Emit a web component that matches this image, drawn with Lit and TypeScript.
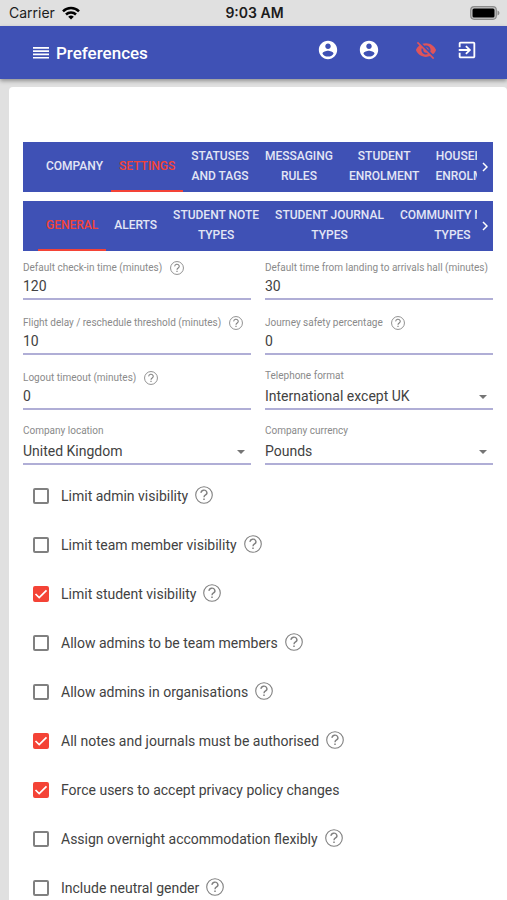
import { LitElement, html, css, svg, nothing } from "lit";
import { customElement, property } from "lit/decorators.js";

interface Field {
  id: string;
  label: string;
  value: string;
  kind: "number" | "select";
  help?: boolean;
}

interface Option {
  id: string;
  label: string;
  checked: boolean;
  help: boolean;
}

const FIELDS: Field[] = [
  { id: "checkin", label: "Default check-in time (minutes)", value: "120", kind: "number", help: true },
  { id: "landing", label: "Default time from landing to arrivals hall (minutes)", value: "30", kind: "number" },
  { id: "delay", label: "Flight delay / reschedule threshold (minutes)", value: "10", kind: "number", help: true },
  { id: "safety", label: "Journey safety percentage", value: "0", kind: "number", help: true },
  { id: "logout", label: "Logout timeout (minutes)", value: "0", kind: "number", help: true },
  { id: "phone", label: "Telephone format", value: "International except UK", kind: "select" },
  { id: "location", label: "Company location", value: "United Kingdom", kind: "select" },
  { id: "currency", label: "Company currency", value: "Pounds", kind: "select" },
];

const OPTIONS: Option[] = [
  { id: "limit-admin", label: "Limit admin visibility", checked: false, help: true },
  { id: "limit-team", label: "Limit team member visibility", checked: false, help: true },
  { id: "limit-student", label: "Limit student visibility", checked: true, help: true },
  { id: "admins-team", label: "Allow admins to be team members", checked: false, help: true },
  { id: "admins-org", label: "Allow admins in organisations", checked: false, help: true },
  { id: "notes-auth", label: "All notes and journals must be authorised", checked: true, help: true },
  { id: "privacy", label: "Force users to accept privacy policy changes", checked: true, help: false },
  { id: "overnight", label: "Assign overnight accommodation flexibly", checked: false, help: true },
  { id: "neutral", label: "Include neutral gender", checked: false, help: true },
];

const MAIN_TABS = [
  ["COMPANY"],
  ["SETTINGS"],
  ["STATUSES", "AND TAGS"],
  ["MESSAGING", "RULES"],
  ["STUDENT", "ENROLMENT"],
  ["HOUSEHOLD", "ENROLMENT"],
];

const SUB_TABS = [
  ["GENERAL"],
  ["ALERTS"],
  ["STUDENT NOTE", "TYPES"],
  ["STUDENT JOURNAL", "TYPES"],
  ["COMMUNITY NOTE", "TYPES"],
];

const ACCOUNT = svg`<path d="M12 2C6.48 2 2 6.48 2 12s4.48 10 10 10 10-4.48 10-10S17.52 2 12 2zm0 3c1.66 0 3 1.34 3 3s-1.34 3-3 3-3-1.34-3-3 1.34-3 3-3zm0 14.2c-2.5 0-4.71-1.28-6-3.22.03-1.99 4-3.08 6-3.08 1.99 0 5.97 1.09 6 3.08-1.29 1.94-3.5 3.22-6 3.22z"/>`;
const HIDDEN = svg`<path d="M12 7c2.76 0 5 2.24 5 5 0 .65-.13 1.26-.36 1.83l2.92 2.92c1.51-1.26 2.7-2.89 3.43-4.75-1.73-4.39-6-7.5-11-7.5-1.4 0-2.74.25-3.98.7l2.16 2.16C10.74 7.13 11.35 7 12 7zM2 4.27l2.28 2.28.46.46C3.08 8.3 1.78 10.02 1 12c1.73 4.39 6 7.5 11 7.5 1.55 0 3.03-.3 4.38-.84l.42.42L19.73 22 21 20.73 3.27 3 2 4.27zM7.53 9.8l1.55 1.55c-.05.21-.08.43-.08.65 0 1.66 1.34 3 3 3 .22 0 .44-.03.65-.08l1.55 1.55c-.67.33-1.41.53-2.2.53-2.76 0-5-2.24-5-5 0-.79.2-1.53.53-2.2zm4.31-.78l3.15 3.15.02-.16c0-1.66-1.34-3-3-3l-.17.01z"/>`;
const EXIT = svg`<path d="M10.09 15.59L11.5 17l5-5-5-5-1.41 1.41L12.67 11H3v2h9.67l-2.58 2.59zM19 3H5c-1.11 0-2 .9-2 2v4h2V5h14v14H5v-4H3v4c0 1.1.89 2 2 2h14c1.1 0 2-.9 2-2V5c0-1.1-.9-2-2-2z"/>`;

@customElement("help-button")
export class HelpButton extends LitElement {
  @property() topic = "";

  static styles = css`
    :host {
      display: block;
      width: 14px;
      height: 14px;
      flex: none;
    }
    :host([large]) {
      width: 18px;
      height: 18px;
    }
    .help {
      display: block;
      width: 100%;
      height: 100%;
      padding: 0;
      border: 0;
      background: none;
      color: #808080;
    }
    .glyph {
      display: block;
      width: 100%;
      height: 100%;
      fill: none;
      stroke: currentColor;
    }
  `;

  render() {
    return html`<button class="help" type="button" aria-label="Help: ${this.topic}">
      <svg class="glyph" viewBox="0 0 18 18" aria-hidden="true">
        <circle cx="9" cy="9" r="8.3" stroke-width="1.1" />
        <path d="M6.1 6.9a2.9 2.6 0 1 1 4.5 2c-1 .7-1.6 1.1-1.6 2.3" stroke-width="1.4" />
        <path d="M9 12.4v1.6" stroke-width="1.5" />
      </svg>
    </button>`;
  }
}

@customElement("tab-strip")
export class TabStrip extends LitElement {
  @property({ attribute: false }) tabs: string[][] = [];
  @property({ type: Number }) active = 0;
  @property() name = "";

  static styles = css`
    :host {
      display: flex;
      height: 50px;
      padding-left: 15px;
      background: #3f51b5;
    }
    .tabs {
      display: flex;
      flex: 1;
      min-width: 0;
      overflow: hidden;
    }
    .tab {
      flex: none;
      padding: 0 8px;
      border: 0;
      border-bottom: 2px solid transparent;
      background: none;
      color: #e3e6f5;
      font: 500 12px/20px Roboto, sans-serif;
      text-align: center;
    }
    .tab.on {
      color: #f44336;
      border-color: #f44336;
    }
    .line {
      display: block;
      white-space: nowrap;
    }
    .next {
      display: grid;
      flex: none;
      place-items: center;
      width: 16px;
      padding: 0;
      border: 0;
      background: none;
    }
    .chevron {
      width: 6px;
      height: 10px;
      fill: none;
      stroke: #ffffff;
      stroke-width: 1.5;
    }
  `;

  render() {
    return html`
      <div class="tabs" role="tablist" aria-label=${this.name}>
        ${this.tabs.map(
          (lines, i) => html`<button
            class="tab ${i === this.active ? "on" : ""}"
            role="tab"
            aria-selected=${i === this.active ? "true" : "false"}
          >${lines.map((line) => html`<span class="line">${line}</span>`)}</button>`
        )}
      </div>
      <button class="next" type="button" aria-label="More tabs">
        <svg class="chevron" viewBox="0 0 6 10" aria-hidden="true"><path d="M1 1l4 4-4 4" /></svg>
      </button>
    `;
  }
}

@customElement("app-root")
export class AppRoot extends LitElement {
  static styles = css`
    :host {
      display: block;
      min-height: 100vh;
      background: #e0e0e0;
      color: #424242;
      font-family: Roboto, sans-serif;
    }
    .status {
      display: grid;
      grid-template-columns: 1fr auto 1fr;
      align-items: center;
      height: 26px;
      padding: 0 7px 0 9px;
      color: #1c1c1c;
      font: 14px/20px Inter, sans-serif;
    }
    .carrier {
      display: flex;
      align-items: center;
      gap: 7px;
    }
    .wifi {
      width: 18px;
      height: 14px;
    }
    .time {
      font-weight: 600;
    }
    .battery {
      justify-self: end;
      width: 30px;
      height: 14px;
    }
    .bar {
      display: flex;
      align-items: center;
      height: 53px;
      padding: 0 29px 0 33px;
      background: #3f51b5;
      box-shadow: 0 2px 4px rgba(0, 0, 0, 0.35);
      color: #ffffff;
    }
    .icon {
      display: block;
      padding: 0;
      border: 0;
      background: none;
      color: inherit;
    }
    .icon svg {
      display: block;
      fill: currentColor;
    }
    .title {
      flex: 1;
      margin: 0 0 0 7px;
      font: 500 17px/24px Roboto, sans-serif;
    }
    .actions {
      display: flex;
      align-items: center;
      gap: 19px;
      padding-bottom: 6px;
    }
    .actions svg {
      width: 22px;
      height: 22px;
    }
    .off {
      margin-left: 16px;
      color: #e0545a;
    }
    .card {
      margin: 8px 0 0 9px;
      padding: 55px 14px 2px;
      border-radius: 4px 4px 0 0;
      background: #ffffff;
    }
    .strips {
      display: grid;
      grid-template-columns: minmax(0, 1fr);
      gap: 9px;
    }
    .fields {
      display: grid;
      grid-template-columns: repeat(2, minmax(0, 1fr));
      gap: 0 14px;
      margin-top: 3px;
    }
    .field {
      display: flex;
      flex-direction: column;
      justify-content: flex-end;
      min-width: 0;
      height: 55px;
    }
    .fields .field:nth-child(-n + 2) {
      height: 46px;
    }
    .caption {
      display: flex;
      align-items: center;
      gap: 8px;
      height: 14px;
      color: #8a8a8a;
      font-size: 10px;
      line-height: 14px;
      white-space: nowrap;
    }
    .caption.tall {
      height: 16px;
      align-items: flex-start;
    }
    .pick {
      display: grid;
      align-items: center;
    }
    .control {
      grid-area: 1 / 1;
      box-sizing: border-box;
      width: 100%;
      height: 25px;
      margin: 0;
      padding: 0 0 2px;
      border: 0;
      border-bottom: 2px solid #b0aed6;
      border-radius: 0;
      outline: 0;
      appearance: none;
      background: transparent;
      color: #424242;
      font: 14px/20px Roboto, sans-serif;
    }
    .arrow {
      grid-area: 1 / 1;
      justify-self: end;
      width: 8px;
      height: 4px;
      margin: 0 6px 2px 0;
      fill: #757575;
      pointer-events: none;
    }
    .options {
      display: grid;
      gap: 29px;
      margin: 21px 0 0;
      padding: 0 0 0 10px;
      list-style: none;
    }
    .option {
      display: flex;
      align-items: center;
      height: 20px;
      font-size: 14px;
      line-height: 20px;
    }
    .tick {
      display: grid;
      width: 16px;
      height: 16px;
      margin-right: 12px;
    }
    .box {
      grid-area: 1 / 1;
      box-sizing: border-box;
      width: 16px;
      height: 16px;
      margin: 0;
      border: 2px solid #808080;
      border-radius: 2px;
      appearance: none;
    }
    .box:checked {
      border-color: #f44336;
      background: #f44336;
    }
    .mark {
      grid-area: 1 / 1;
      width: 16px;
      height: 16px;
      fill: none;
      stroke: #ffffff;
      stroke-width: 1.7;
      pointer-events: none;
    }
    .box:not(:checked) + .mark {
      visibility: hidden;
    }
    .option help-button {
      margin: 0 0 3px 7px;
    }
  `;

  private field(f: Field) {
    return html`<div class="field">
      <div class="caption ${f.kind === "select" ? "tall" : ""}">
        <label for=${f.id}>${f.label}</label>
        ${f.help ? html`<help-button topic=${f.label}></help-button>` : nothing}
      </div>
      ${f.kind === "select"
        ? html`<div class="pick">
            <select class="control" id=${f.id}><option>${f.value}</option></select>
            <svg class="arrow" viewBox="0 0 8 4" aria-hidden="true"><path d="M0 0h8L4 4z" /></svg>
          </div>`
        : html`<input class="control" id=${f.id} inputmode="numeric" .value=${f.value} />`}
    </div>`;
  }

  private option(o: Option) {
    return html`<li class="option">
      <span class="tick">
        <input class="box" type="checkbox" id=${o.id} .checked=${o.checked} />
        <svg class="mark" viewBox="0 0 16 16" aria-hidden="true"><path d="M2.5 8l3.7 3.6L13.5 4.4" /></svg>
      </span>
      <label for=${o.id}>${o.label}</label>
      ${o.help ? html`<help-button large topic=${o.label}></help-button>` : nothing}
    </li>`;
  }

  private action(label: string, shape: unknown, extra = "") {
    return html`<button class="icon ${extra}" type="button" aria-label=${label}>
      <svg viewBox="0 0 24 24" aria-hidden="true">${shape}</svg>
    </button>`;
  }

  render() {
    return html`
      <div class="status">
        <span class="carrier">
          Carrier
          <svg class="wifi" viewBox="0 0 18 14" fill="none" stroke="#000000" stroke-width="2.5" aria-hidden="true">
            <path d="M1 5.3a11.4 11.4 0 0 1 16 0" />
            <path d="M4 8.5a7.1 7.1 0 0 1 10 0" />
            <path d="M9 13.6L6.2 10.8a4 4 0 0 1 5.6 0z" fill="#000000" stroke="none" />
          </svg>
        </span>
        <span class="time">9:03 AM</span>
        <svg class="battery" viewBox="0 0 30 14" aria-hidden="true">
          <rect x=".7" y=".7" width="25.6" height="12.6" rx="3.5" fill="#c4c4c4" stroke="#8c8c8c" stroke-width="1.2" />
          <rect x="2.5" y="2.5" width="22" height="9" rx="1.5" fill="#000000" />
          <path d="M27.5 4.5c2.6 1 2.6 4 0 5z" fill="#8c8c8c" />
        </svg>
      </div>
      <header class="bar">
        <button class="icon" type="button" aria-label="Menu">
          <svg width="16" height="12" viewBox="0 0 16 12" aria-hidden="true">
            <path d="M0 0h16v1.7H0zM0 3.3h16V5H0zM0 6.6h16v1.7H0zM0 9.9h16v1.7H0z" />
          </svg>
        </button>
        <h1 class="title">Preferences</h1>
        <div class="actions">
          ${this.action("Account", ACCOUNT)} ${this.action("Profile", ACCOUNT)}
          ${this.action("Hidden", HIDDEN, "off")} ${this.action("Sign out", EXIT)}
        </div>
      </header>
      <main class="card">
        <div class="strips">
          <tab-strip name="Sections" .tabs=${MAIN_TABS} .active=${1}></tab-strip>
          <tab-strip name="Settings" .tabs=${SUB_TABS} .active=${0}></tab-strip>
        </div>
        <form class="fields">${FIELDS.map((f) => this.field(f))}</form>
        <ul class="options">${OPTIONS.map((o) => this.option(o))}</ul>
      </main>
    `;
  }
}
